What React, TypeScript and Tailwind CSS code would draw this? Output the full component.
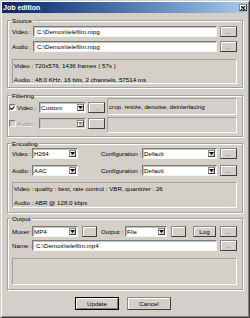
import type { ReactNode } from "react";

const sunken =
  "border border-[#7a7a7a] border-r-[#f4f4f4] border-b-[#f4f4f4] shadow-[inset_1px_1px_0_#c0c0c0]";
const raised =
  "border border-[#8a8a8a] border-r-[#404040] border-b-[#404040] shadow-[inset_1px_1px_0_#fff]";
const panel = "border border-[#a0a0a0] border-r-white border-b-white";

function Group({ title, className, children }: { title: string; className: string; children: ReactNode }) {
  return (
    <div
      className={`relative border border-[#a0a0a0] shadow-[inset_1px_1px_0_#fff,1px_1px_0_#fff] ${className}`}
    >
      <span className="absolute -top-[4px] left-[3px] bg-[#d4d0c8] px-[1px] leading-[7px]">{title}</span>
      {children}
    </div>
  );
}

function Input({ value }: { value: string }) {
  return (
    <div className={`flex h-[11px] flex-1 items-center bg-white pl-[3px] leading-[7px] ${sunken}`}>
      {value}
    </div>
  );
}

function Dots({ w = "w-[17px]", disabled = false, className = "" }: { w?: string; disabled?: boolean; className?: string }) {
  return (
    <div
      className={`flex h-[11px] ${w} items-center justify-center bg-[#d4d0c8] leading-[7px] ${raised} ${
        disabled ? "text-[#a8a8a8]" : "text-[#505050]"
      } ${className}`}
    >
      ...
    </div>
  );
}

function Select({ value, w, disabled = false, className = "" }: { value: string; w: string; disabled?: boolean; className?: string }) {
  return (
    <div className={`flex h-[11px] ${w} items-stretch ${sunken} ${disabled ? "bg-[#d4d0c8]" : "bg-white"} ${className}`}>
      <span className="flex flex-1 items-center overflow-hidden pl-[1px] leading-[7px]">{value}</span>
      <span className={`m-[1px] flex w-[7px] items-center justify-center bg-[#d4d0c8] ${raised}`}>
        <svg width="5" height="3" viewBox="0 0 5 3">
          <path d="M0 0H5L2.5 3Z" fill={disabled ? "#8a8a8a" : "#000"} />
        </svg>
      </span>
    </div>
  );
}

function Label({ text, w, className = "" }: { text: string; w: string; className?: string }) {
  return <span className={`${w} shrink-0 whitespace-nowrap leading-[7px] ${className}`}>{text}</span>;
}

export default function App() {
  return (
    <div className="h-[318px] w-[250px] border border-[#d4d0c8] border-r-[#404040] border-b-[#404040] bg-[#d4d0c8] p-[1px] font-['Liberation_Sans',Arial,sans-serif] text-[6.2px] text-black shadow-[inset_1px_1px_0_#fff,inset_-1px_-1px_0_#808080]">
      {/* title bar */}
      <div className="flex h-[11px] items-center justify-between bg-linear-to-r from-[#0a246a] to-[#a6caf0] pl-[1px] pr-[1px]">
        <span className="text-[7px] font-bold leading-[8px] text-white">Job edition</span>
        <span className={`flex h-[7px] w-[8px] items-center justify-center bg-[#d4d0c8] ${raised}`}>
          <svg width="4" height="4" viewBox="0 0 4 4">
            <path d="M0 0L4 4M4 0L0 4" stroke="#000" strokeWidth="1.1" />
          </svg>
        </span>
      </div>

      <div className="px-[5px]">
        <Group title="Source" className="mt-[7px] pt-[5px] pl-[4px] pr-[5px] pb-[3px]">
          <div className="flex h-[11px] items-center">
            <Label text="Video :" w="w-[21px]" />
            <Input value="C:\Demos\telefilm.mpg" />
            <Dots className="ml-[3px]" />
          </div>
          <div className="mt-[4px] flex h-[11px] items-center">
            <Label text="Audio :" w="w-[21px]" />
            <Input value="C:\Demos\telefilm.mpg" />
            <Dots className="ml-[3px]" />
          </div>
          <div className={`mt-[7px] flex h-[25px] flex-col gap-[7px] px-[1px] pt-[2px] leading-[7px] ${panel}`}>
            <span>Video : 720x576, 1436 frames ( 57s )</span>
            <span>Audio : 48.0 KHz, 16 bits, 2 channels, 57514 ms</span>
          </div>
        </Group>

        <Group title="Filtering" className="mt-[7px] flex pt-[2px] pl-[1px] pr-[5px] pb-[3px]">
          <div className="pt-[4px]">
            <div className="flex h-[11px] items-center">
              <span className={`flex h-[7px] w-[7px] items-center justify-center bg-white ${sunken}`}>
                <svg width="5" height="4" viewBox="0 0 5 4">
                  <path d="M0.5 2L2 3.3L4.5 0.5" stroke="#000" strokeWidth="1.1" fill="none" />
                </svg>
              </span>
              <Label text="Video :" w="w-[21px]" className="ml-[1px]" />
              <Select value="Custom" w="w-[47px]" className="ml-[1px]" />
              <Dots className="ml-[2px]" />
            </div>
            <div className="mt-[5px] flex h-[11px] items-center">
              <span className={`h-[7px] w-[7px] bg-[#d4d0c8] ${sunken}`} />
              <Label text="Audio :" w="w-[21px]" className="ml-[1px] text-[#8c8c8c] [text-shadow:0.6px_0.6px_0_#fff]" />
              <Select value="" w="w-[47px]" disabled className="ml-[1px]" />
              <Dots disabled className="ml-[2px]" />
            </div>
          </div>
          <div className="ml-[2px] flex-1">
            <div className={`h-[17px] pl-[1px] pt-[4px] leading-[7px] ${panel}`}>crop, resize, denoise, deinterlacing</div>
            <div className={`mt-[2px] h-[16px] ${panel}`} />
          </div>
        </Group>

        <Group title="Encoding" className="mt-[6px] pt-[4px] pl-[4px] pr-[5px] pb-[4px]">
          <div className="flex h-[11px] items-center">
            <Label text="Video :" w="w-[20px]" />
            <Select value="H264" w="w-[46px]" />
            <Label text="Configuration :" w="w-[41px]" className="ml-[23px]" />
            <Select value="Default" w="flex-1" />
            <Dots className="ml-[3px]" />
          </div>
          <div className="mt-[6px] flex h-[11px] items-center">
            <Label text="Audio :" w="w-[20px]" />
            <Select value="AAC" w="w-[46px]" />
            <Label text="Configuration :" w="w-[41px]" className="ml-[23px]" />
            <Select value="Default" w="flex-1" />
            <Dots className="ml-[3px]" />
          </div>
          <div className={`mt-[6px] flex h-[26px] flex-col gap-[7px] px-[1px] pt-[2px] leading-[7px] ${panel}`}>
            <span>Video : quality : best, rate control : VBR, quantizer : 26</span>
            <span>Audio : ABR @ 128.0 kbps</span>
          </div>
        </Group>

        <Group title="Output" className="mt-[5px] pt-[7px] pl-[4px] pr-[5px] pb-[4px]">
          <div className="flex h-[11px] items-center">
            <Label text="Muxer :" w="w-[20px]" />
            <Select value="MP4" w="w-[46px]" />
            <Dots w="w-[15px]" disabled className="ml-[4px]" />
            <Label text="Output :" w="w-[24px]" className="ml-[4px]" />
            <Select value="File" w="w-[42px]" />
            <Dots w="w-[15px]" disabled className="ml-[4px]" />
            <div className={`ml-[7px] flex h-[11px] w-[23px] items-center justify-center bg-[#d4d0c8] leading-[7px] ${raised}`}>
              Log
            </div>
            <Dots className="ml-[4px]" />
          </div>
          <div className="mt-[3px] flex h-[11px] items-center">
            <Label text="Name :" w="w-[20px]" />
            <Input value="C:\Demos\telefilm.mp4" />
            <Dots className="ml-[3px]" />
          </div>
          <div className={`mt-[7px] h-[27px] ${panel}`} />
        </Group>

        <div className="mt-[7px] flex">
          <div className="ml-[68px] flex h-[13px] w-[44px] items-center justify-center border border-black bg-[#d4d0c8] leading-[7px] shadow-[inset_1px_1px_0_#fff,inset_-1px_-1px_0_#808080]">
            Update
          </div>
          <div className={`ml-[8px] flex h-[13px] w-[44px] items-center justify-center bg-[#d4d0c8] leading-[7px] ${raised}`}>
            Cancel
          </div>
        </div>
      </div>
    </div>
  );
}
